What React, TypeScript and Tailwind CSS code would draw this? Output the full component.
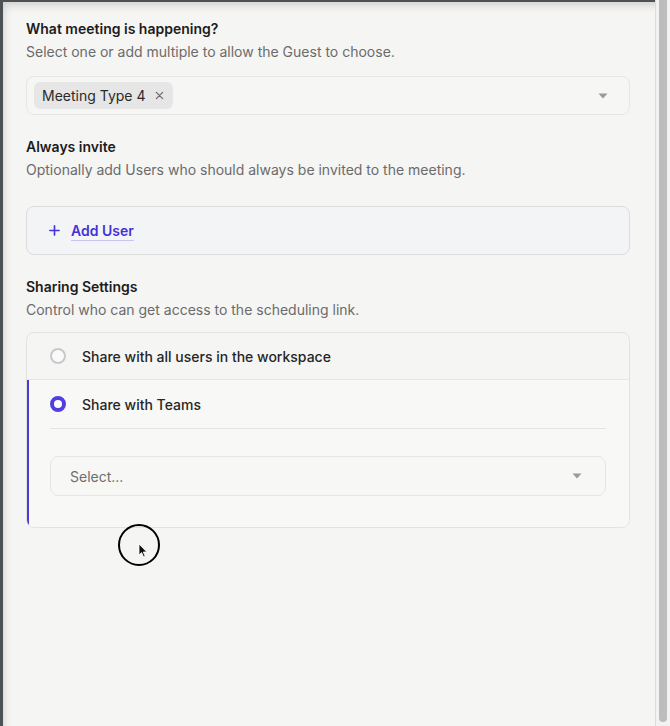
import React from 'react';

function Caret() {
  return (
    <svg width="10" height="6" viewBox="0 0 10 6" className="shrink-0">
      <path d="M0.5 0.5 L9.5 0.5 L5 5.5 Z" fill="#9a9a9a" />
    </svg>
  );
}

function SectionHeader({ title, subtitle }: { title: string; subtitle: string }) {
  return (
    <div className="flex flex-col gap-[3px]">
      <h3 className="text-[14px] leading-[20px] font-semibold text-[#1c1c1c]">{title}</h3>
      <p className="text-[14px] leading-[20px] text-[#6b6b6b]">{subtitle}</p>
    </div>
  );
}

function Radio({ checked }: { checked?: boolean }) {
  if (checked) {
    return <span className="w-4 h-4 rounded-full border-[4px] border-[#4f3fe0] bg-white shrink-0" />;
  }
  return <span className="w-4 h-4 rounded-full border-2 border-[#c9c9c9] bg-[#fafafa] shrink-0" />;
}

export default function App() {
  return (
    <div
      className="relative w-[670px] h-[726px] flex bg-[#f5f5f4] overflow-hidden"
      style={{ fontFamily: 'Inter, "Noto Sans", "Liberation Sans", sans-serif' }}
    >
      <div className="flex-1 flex border-l-[3px] border-t-[2px] border-[#4d5254] shadow-[inset_6px_8px_10px_-6px_rgba(0,0,0,0.18)]">
        <div className="flex-1 flex flex-col pl-[23px] pr-[25px] pt-[17px]">
          <SectionHeader
            title="What meeting is happening?"
            subtitle="Select one or add multiple to allow the Guest to choose."
          />

          <div className="mt-[14px] h-[39px] rounded-lg border border-[#e6e6e4] bg-[#f6f6f5] flex items-center pl-[7px] pr-[21px]">
            <span className="h-[27px] pl-[8px] pr-[9px] rounded-md bg-[#e6e6e6] flex items-center gap-[10px] text-[14px] text-[#2a2a2a]">
              Meeting Type 4
              <svg width="9" height="9" viewBox="0 0 10 10">
                <path d="M1.5 1.5 L8.5 8.5 M8.5 1.5 L1.5 8.5" stroke="#6a6a6a" strokeWidth="1.4" strokeLinecap="round" />
              </svg>
            </span>
            <span className="flex-1" />
            <Caret />
          </div>

          <div className="mt-[22px]">
            <SectionHeader
              title="Always invite"
              subtitle="Optionally add Users who should always be invited to the meeting."
            />
          </div>

          <div className="mt-[26px] h-[49px] rounded-lg border border-[#dcdcdc] bg-[#f3f4f6] flex items-center pl-[22px] gap-[11px]">
            <svg width="11" height="11" viewBox="0 0 12 12">
              <path d="M6 1 V11 M1 6 H11" stroke="#4433d4" strokeWidth="1.8" strokeLinecap="round" />
            </svg>
            <span className="text-[14px] font-semibold text-[#4433d4] underline decoration-[#c9c3f3] underline-offset-[4px]">
              Add User
            </span>
          </div>

          <div className="mt-[22px]">
            <SectionHeader
              title="Sharing Settings"
              subtitle="Control who can get access to the scheduling link."
            />
          </div>

          <div className="mt-[12px] rounded-lg border border-[#e3e3e3] bg-[#f5f5f4] overflow-hidden">
            <div className="h-[47px] flex items-center gap-[16px] pl-[23px] border-b border-[#e6e6e6]">
              <Radio />
              <span className="text-[14px] font-medium text-[#262626]">Share with all users in the workspace</span>
            </div>
            <div className="border-l-2 border-[#4b3ad6] bg-[#f8f8f7] pl-[21px] pr-[23px] pb-[31px]">
              <div className="h-[49px] flex items-center gap-[16px] border-b border-[#e4e4e4]">
                <Radio checked />
                <span className="text-[14px] font-medium text-[#262626]">Share with Teams</span>
              </div>
              <div className="mt-[27px] h-[40px] rounded-lg border border-[#e6e6e4] bg-[#f7f7f6] flex items-center pl-[19px] pr-[23px]">
                <span className="flex-1 text-[14px] text-[#6e6e6e]">Select...</span>
                <Caret />
              </div>
            </div>
          </div>
        </div>
      </div>

      <div className="w-[15px] border-l border-[#dcdcdc] bg-[#f2f2f2] flex justify-center pb-[4px]">
        <div className="w-[8px] h-full rounded-b-full bg-[#bdbdbd]" />
      </div>

      <div className="absolute left-[118px] top-[524px] w-[42px] h-[42px] rounded-full border-2 border-black">
        <svg className="absolute left-[18px] top-[17px]" width="10" height="15" viewBox="0 0 10 15">
          <path d="M1 1 L1 12 L3.6 9.6 L5.6 14 L7.2 13.3 L5.3 9 L8.8 9 Z" fill="#111" stroke="#fff" strokeWidth="0.8" />
        </svg>
      </div>
    </div>
  );
}
